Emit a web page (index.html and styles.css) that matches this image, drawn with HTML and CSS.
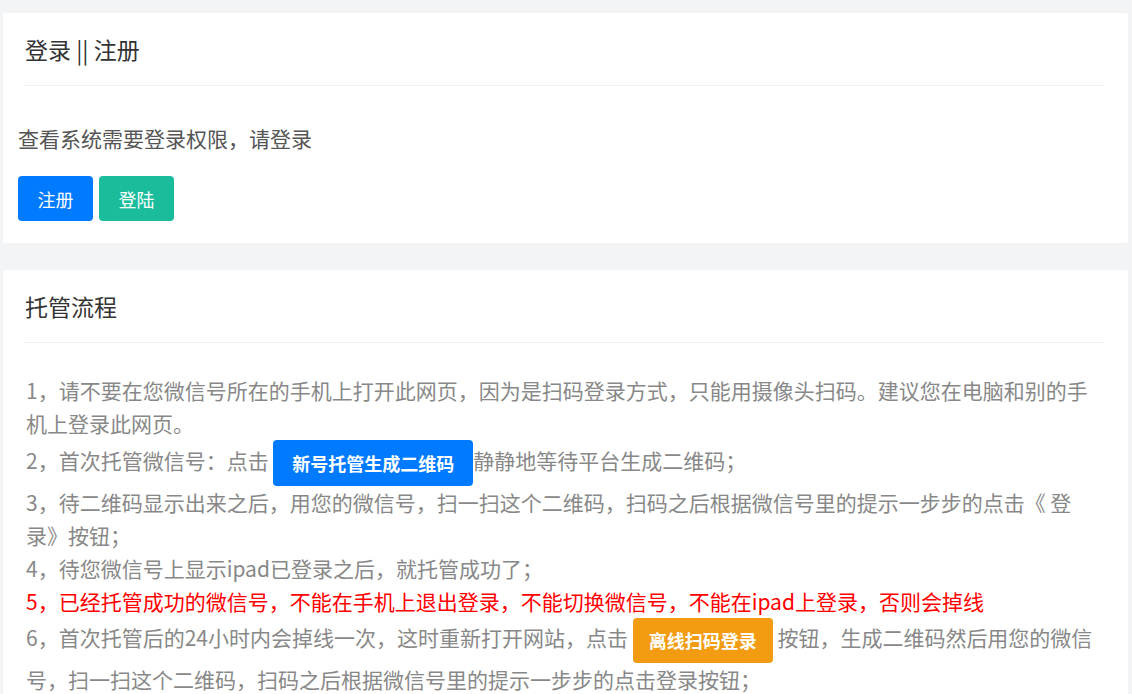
FILE: index.html
```html
<!DOCTYPE html>
<html lang="zh-CN">
<head>
  <meta charset="UTF-8" />
  <meta name="viewport" content="width=device-width, initial-scale=1.0"/>
  <title>登录 || 注册</title>
  <link rel="stylesheet" href="styles.css">
</head>
<body>

  <!-- 登录 / 注册 -->
  <div class="card">
    <div class="card-header">登录 || 注册</div>
    <div class="card-body login-body">
      <p class="tip">查看系统需要登录权限，请登录</p>
      <div class="btn-row">
        <button class="btn btn-blue">注册</button>
        <button class="btn btn-green">登陆</button>
      </div>
    </div>
  </div>

  <!-- 托管流程 -->
  <div class="card">
    <div class="card-header">托管流程</div>
    <div class="card-body steps">
      <div class="step">1，请不要在您微信号所在的手机上打开此网页，因为是扫码登录方式，只能用摄像头扫码。建议您在电脑和别的手机上登录此网页。</div>
      <div class="step">2，首次托管微信号：点击 <span class="btn-inline btn-blue">新号托管生成二维码</span>静静地等待平台生成二维码；</div>
      <div class="step">3，待二维码显示出来之后，用您的微信号，扫一扫这个二维码，扫码之后根据微信号里的提示一步步的点击《 登录》按钮；</div>
      <div class="step">4，待您微信号上显示ipad已登录之后，就托管成功了；</div>
      <div class="step warn">5，已经托管成功的微信号，不能在手机上退出登录，不能切换微信号，不能在ipad上登录，否则会掉线</div>
      <div class="step">6，首次托管后的24小时内会掉线一次，这时重新打开网站，点击 <span class="btn-inline btn-orange">离线扫码登录</span> 按钮，生成二维码然后用您的微信号，扫一扫这个二维码，扫码之后根据微信号里的提示一步步的点击登录按钮；</div>
    </div>
  </div>

</body>
</html>
```

FILE: styles.css
```css
body {
  font-family: "Noto Sans CJK SC", "Microsoft YaHei", sans-serif;
  margin: 0;
  padding: 13px 4px 0 3px;
  background-color: #f3f4f6;
}
.card {
  background: #fff;
  border-radius: 2px;
  margin-bottom: 27px;
}
.card-header {
  margin: 0 24px 0 22px;
  padding: 21px 0 21px;
  font-size: 23px;
  line-height: 30px;
  color: #333;
  border-bottom: 1px solid #f0f0f0;
}
.login-body {
  padding: 37px 15px 22px;
}
.tip {
  margin: 0 0 23px;
  font-size: 21px;
  line-height: 30px;
  color: #555;
}
.btn-row {
  display: flex;
  gap: 6px;
}
.btn {
  width: 75px;
  height: 45px;
  padding: 0;
  border: none;
  border-radius: 4px;
  font-family: inherit;
  font-size: 18px;
  color: #fff;
}
.btn-blue {
  background-color: #007bff;
}
.btn-green {
  background-color: #1abc9c;
}
.btn-orange {
  background-color: #f39c12;
}

/* 托管流程 */
.steps {
  padding: 31px 30px 30px 23px;
}
.step {
  font-size: 21px;
  line-height: 33px;
  color: #888;
}
.warn {
  color: #f00;
}
.btn-inline {
  display: inline-block;
  vertical-align: middle;
  padding: 0 19px;
  line-height: 46px;
  border-radius: 4px;
  font-size: 18px;
  font-weight: bold;
  color: #fff;
}
.btn-orange.btn-inline {
  padding: 0 16px;
  line-height: 45px;
}
```
